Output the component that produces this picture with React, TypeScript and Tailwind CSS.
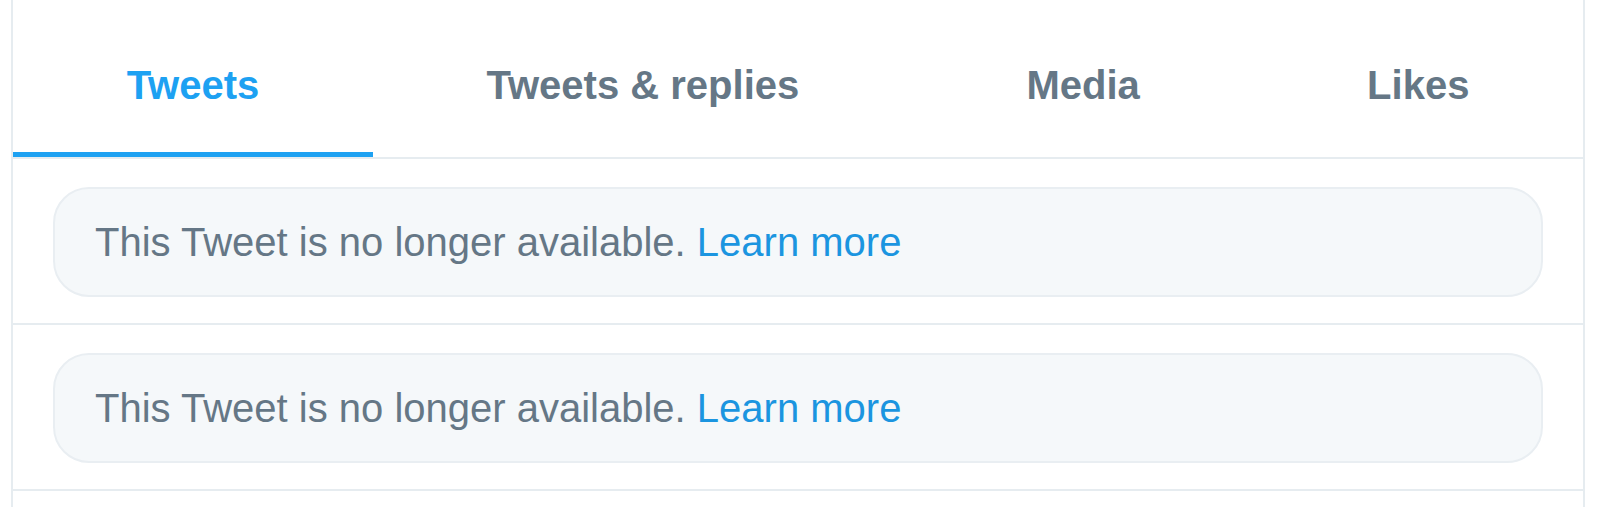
import { useState } from "react";

type Tab = { id: string; label: string };

const TABS: Tab[] = [
  { id: "tweets", label: "Tweets" },
  { id: "replies", label: "Tweets & replies" },
  { id: "media", label: "Media" },
  { id: "likes", label: "Likes" },
];

// 削除済みツイートのプレースホルダー行
function Unavailable() {
  return (
    <div className="border-b-2 border-[#e6ecf0] px-[40px] pt-[28px] pb-[26px]">
      <div className="flex h-[110px] items-center rounded-[36px] border-2 border-[#e9eef2] bg-[#f5f8fa] px-[40px] text-[40px] text-[#657786]">
        <p>
          This Tweet is no longer available.{" "}
          <a href="#" className="text-[#1b95e0]">
            Learn more
          </a>
        </p>
      </div>
    </div>
  );
}

export default function App() {
  const [active, setActive] = useState("tweets");

  return (
    <div className="min-h-[507px] bg-white font-['Liberation_Sans',Arial,sans-serif]">
      <div className="ml-[11px] min-h-[507px] w-[1574px] border-x-2 border-[#e6ecf0]">
        <nav className="flex border-b-2 border-[#e6ecf0]">
          {TABS.map((tab) => (
            <button
              key={tab.id}
              type="button"
              onClick={() => setActive(tab.id)}
              className={
                "flex h-[157px] flex-auto items-center justify-center border-b-[5px] pt-[18px] text-[40px] font-bold " +
                (active === tab.id
                  ? "border-[#1da1f2] text-[#1da1f2]"
                  : "border-transparent text-[#657786]")
              }
            >
              {tab.label}
            </button>
          ))}
        </nav>
        <Unavailable />
        <Unavailable />
      </div>
    </div>
  );
}
